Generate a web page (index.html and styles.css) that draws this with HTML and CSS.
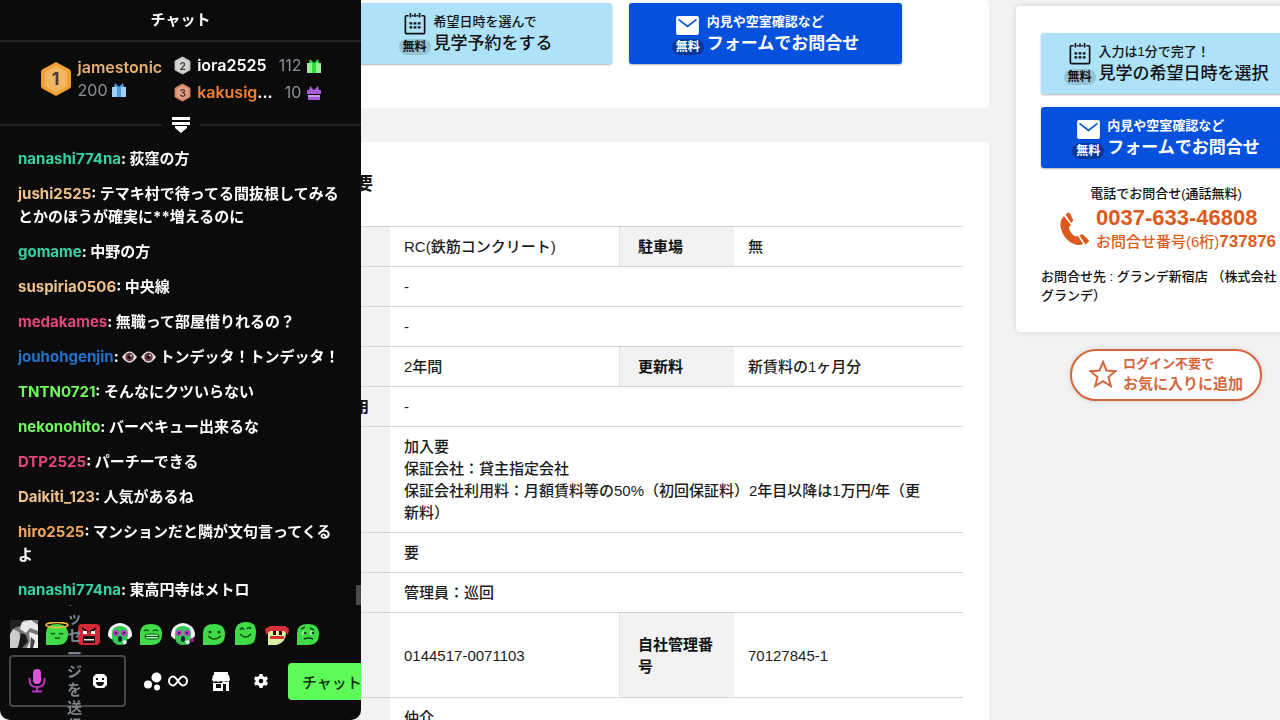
FILE: index.html
```html
<!DOCTYPE html>
<html lang="ja">
<head>
    <meta charset="utf-8" />
    <title>チャット</title>
    <link rel="stylesheet" href="styles.css">
</head>
<body>
    <!-- shared symbols -->
    <svg class="defs" aria-hidden="true">
        <symbol id="calendar" viewBox="0 0 24 24">
            <path d="M5 3.5H2.5a1 1 0 0 0-1 1V22a1 1 0 0 0 1 1h19a1 1 0 0 0 1-1V4.500a1 1 0 0 0-1-1H19M8.500 3.500h2M13.500 3.500h2M7 .5v5M12 1v4M17 .5v5" fill="none" stroke="currentColor" stroke-width="1.800" />
            <path d="M6 10.500h3v2.500H6zM10.500 10.500h3v2.500h-3zM15 10.500h3v2.500h-3zM6 15h3v2.500H6zM10.500 15h3v2.500h-3zM15 15h3v2.500h-3z" fill="currentColor" />
        </symbol>
        <symbol id="mail" viewBox="0 0 24 20">
            <rect x="0" y="0" width="24" height="20" rx="2" fill="#fff" />
            <path d="M2.500 3.500L12 11l9.500-7.500" fill="none" stroke="#0550dc" stroke-width="1.600" />
        </symbol>
        <symbol id="gift" viewBox="0 0 14 14">
            <path d="M0 4h14v10H0z" fill="currentColor" />
            <path d="M7 4L3 0 2 4zM7 4l4-4 1 4z" fill="currentColor" />
            <path d="M0 4h5v10H0zM9 4h5v10H9z" fill="#fff" opacity=".5" />
        </symbol>
        <symbol id="gift-box" viewBox="0 0 14 14">
            <path d="M0 4h14v4H0zM1 9h12v5H1z" fill="currentColor" />
            <path d="M7 4L3 0 2 4zM7 4l4-4 1 4z" fill="currentColor" />
            <path d="M1 9h12v2H1z" fill="#fff" opacity=".4" />
        </symbol>
        <symbol id="hex" viewBox="0 0 32 36">
            <path d="M16 1l13 7q2 1 2 3v14q0 2-2 3l-13 7-13-7q-2-1-2-3V11q0-2 2-3z" fill="currentColor" />
            <path d="M16 5l11 6v14l-11 6-11-6V11z" fill="#fff" opacity=".22" />
        </symbol>
        <symbol id="eye" viewBox="0 0 16 12">
            <path d="M0 6q8-12 16 0-8 12-16 0z" fill="#eadfe0" />
            <circle cx="8" cy="6" r="4.500" fill="#6b3a45" />
            <circle cx="8" cy="6" r="2" fill="#1c0c12" />
            <circle cx="9.500" cy="4.500" r="1" fill="#fff" />
        </symbol>
        <symbol id="blob" viewBox="0 0 24 24">
            <path d="M1 23V11Q1 2 12 2t11 10q0 11-11 11z" fill="#3fdc48" />
        </symbol>
        <symbol id="headset" viewBox="0 0 24 24">
            <path d="M0 14Q0 7 4 4q8-6 16 0 4 3 4 10l-3 3H3z" fill="#f4f4f4" />
            <path d="M4 17V11q0-7 8-7t8 7q0 12-8 12-6 0-8-6z" fill="#35c956" />
            <circle cx="8" cy="11" r="3" fill="#b83fc4" />
            <circle cx="16" cy="11" r="3" fill="#b83fc4" />
            <circle cx="8" cy="11" r="1" fill="#240b35" />
            <circle cx="16" cy="11" r="1" fill="#240b35" />
            <ellipse cx="12" cy="17" rx="2" ry="3" fill="#123" />
            <path d="M14 19l4-1 1 3-3 2z" fill="#dff5e3" />
        </symbol>
    </svg>

    <section class="chat">
        <header class="chat-title">チャット</header>

        <div class="leaderboard">
            <div class="first">
                <span class="badge large gold"><svg><use href="#hex" /></svg><b>1</b></span>
                <div>
                    <div class="name gold-name">jamestonic</div>
                    <div class="count">200 <svg class="gift blue"><use href="#gift" /></svg></div>
                </div>
            </div>
            <div class="others">
                <span class="badge silver"><svg><use href="#hex" /></svg><b>2</b></span>
                <span class="name">iora2525</span>
                <span class="count">112</span>
                <svg class="gift green"><use href="#gift" /></svg>
                <span class="badge bronze"><svg><use href="#hex" /></svg><b>3</b></span>
                <span class="name"><span class="bronze-name">kakusig</span>...</span>
                <span class="count">10</span>
                <svg class="gift purple"><use href="#gift-box" /></svg>
            </div>
        </div>

        <div class="divider">
            <svg viewBox="0 0 18 16"><path d="M0 0h18v3H0zM0 5h18v3H0zM3 9h12v2l-6 5-6-5z" fill="#fff" /></svg>
        </div>

        <div class="messages">
            <p><b class="teal">nanashi774na</b>: 荻窪の方</p>
            <p><b class="sand">jushi2525</b>: テマキ村で待ってる間抜根してみるとかのほうが確実に**増えるのに</p>
            <p><b class="teal">gomame</b>: 中野の方</p>
            <p><b class="sand">suspiria0506</b>: 中央線</p>
            <p><b class="pink">medakames</b>: 無職って部屋借りれるの？</p>
            <p><b class="navy">jouhohgenjin</b>: <svg class="eye"><use href="#eye" /></svg> <svg class="eye"><use href="#eye" /></svg> トンデッタ！トンデッタ！</p>
            <p><b class="lime">TNTN0721</b>: そんなにクツいらない</p>
            <p><b class="lime">nekonohito</b>: バーベキュー出来るな</p>
            <p><b class="pink">DTP2525</b>: パーチーできる</p>
            <p><b class="sand">Daikiti_123</b>: 人気があるね</p>
            <p><b class="orange">hiro2525</b>: マンションだと隣が文句言ってくるよ</p>
            <p><b class="teal">nanashi774na</b>: 東高円寺はメトロ</p>
            <span class="thumb"></span>
        </div>

        <div class="emotes">
            <svg viewBox="0 0 28 28">
                <path d="M0 0h28v28H0z" fill="#777" />
                <path d="M0 0h14l-4 6-6 2-4 8z" fill="#222" />
                <path d="M12 2l9-2 7 5v6l-8-3-4 5-6-4z" fill="#e8e8e8" />
                <path d="M3 9l6 3 2 8-4 8H0V14z" fill="#ccc" />
                <path d="M11 13l5 2 2 7-6 6H8z" fill="#1a1a1a" />
                <path d="M19 12l9 3v13H17l3-7z" fill="#eee" />
                <path d="M21 17l4 4-2 7h-3z" fill="#444" />
            </svg>
            <svg viewBox="0 0 24 24">
                <use href="#blob" />
                <ellipse cx="12" cy="3" rx="11" ry="2.500" fill="none" stroke="#f3b63c" stroke-width="1.600" />
                <path d="M6 11q2 2 4 0M14 11q2 2 4 0M10 16h5" fill="none" stroke="#125c1a" stroke-width="1.500" />
            </svg>
            <svg viewBox="0 0 24 24">
                <rect x="1" y="2" width="22" height="21" rx="4" fill="#d62839" />
                <path d="M5 6l6 4M19 6l-6 4" stroke="#200" stroke-width="2" />
                <path d="M6 9h4v3H6zM14 9h4v3h-4z" fill="#fff" />
                <path d="M6 14h12v7H6z" fill="#1a0a0a" />
                <path d="M7 17h10v1.500H7z" fill="#eee" />
            </svg>
            <svg viewBox="0 0 24 24"><use href="#headset" /></svg>
            <svg viewBox="0 0 24 24">
                <use href="#blob" />
                <path d="M5 9q2-2 5 0M14 9q2-2 5 0" fill="none" stroke="#125c1a" stroke-width="1.500" />
                <rect x="6" y="12" width="14" height="5" rx="2.500" fill="#a5eda5" stroke="#125c1a" />
                <path d="M6 14.500h14" stroke="#125c1a" />
            </svg>
            <svg viewBox="0 0 24 24">
                <use href="#headset" />
                <circle cx="21" cy="18" r="2" fill="#c2188c" />
            </svg>
            <svg viewBox="0 0 24 24">
                <use href="#blob" />
                <circle cx="8" cy="10" r="1.500" fill="#0c4a14" />
                <circle cx="17" cy="10" r="1.500" fill="#0c4a14" />
                <path d="M6 14q6 6 13 0" fill="none" stroke="#0c4a14" stroke-width="1.500" />
            </svg>
            <svg viewBox="0 0 24 24">
                <path d="M2 23V9Q3 0 13 0t10 9-3 12q-3 2-8 2z" fill="#3fdc48" />
                <path d="M7 8q2-4 4 0M14 7q2-3 4 0M7 12q6 6 11 0" fill="none" stroke="#0c4a14" stroke-width="1.500" />
            </svg>
            <svg viewBox="0 0 24 24">
                <path d="M3 23V10q0-6 9-6t9 7q0 9-9 12z" fill="#d9f0a0" />
                <path d="M0 7l5-3h15l4 3-1 6-4-4H5l-4 4z" fill="#d9303a" />
                <path d="M8 9h3v4H8zM14 9h3v4h-3z" fill="#300" />
                <path d="M5 14h14v3H5z" fill="#d9303a" />
            </svg>
            <svg viewBox="0 0 24 24">
                <use href="#blob" />
                <path d="M5 7l4-2M14 6l4 2M8 17q5-2 9 0" fill="none" stroke="#0c4a14" stroke-width="1.500" />
                <circle cx="8" cy="11" r="2" fill="#d8f5d8" />
                <circle cx="16" cy="11" r="2" fill="#d8f5d8" />
                <circle cx="9" cy="11" r="1.500" fill="#0c4a14" />
                <circle cx="17" cy="11" r="1.500" fill="#0c4a14" />
            </svg>
        </div>

        <div class="composer">
            <div class="box">
                <button class="icon" aria-label="音声">
                    <svg width="18" height="24" viewBox="0 0 18 24">
                        <rect x="5" y="0" width="8" height="15" rx="4" fill="#d758de" />
                        <path d="M1.500 9v2q0 7 7.500 7t7.500-7V9M9 18v4M4 22.500h10" fill="none" stroke="#b935c4" stroke-width="2" />
                    </svg>
                </button>
                <div class="entry">
                    <textarea aria-label="メッセージ" placeholder="メッセージを送信"></textarea>
                </div>
                <button class="icon" aria-label="エモート">
                    <svg width="14" height="14" viewBox="0 0 14 14">
                        <path d="M3 0h8l3 3v8l-3 3H3l-3-3V3z" fill="#fff" />
                        <path d="M3 4h2v2H3zM9 4h2v2H9zM3 8h8q0 4-4 4T3 8z" fill="#0b0b0b" />
                    </svg>
                </button>
            </div>
            <button class="icon points" aria-label="ポイント">
                <svg width="18" height="19" viewBox="0 0 18 19" fill="#fff">
                    <circle cx="12.500" cy="5.500" r="5" /><circle cx="4" cy="12.500" r="4" /><circle cx="13" cy="15.500" r="3" />
                </svg>
                <svg width="20" height="12" viewBox="0 0 20 12">
                    <path d="M10 6Q7 1.500 5 1.500a4 4.500 0 0 0 0 9Q7 10.500 10 6t5-4.500a4 4.500 0 0 1 0 9Q13 10.500 10 6z" fill="none" stroke="#fff" stroke-width="2" />
                </svg>
            </button>
            <button class="icon shop" aria-label="ショップ">
                <svg width="18" height="19" viewBox="0 0 18 19">
                    <path d="M2 0h14v3H2zM1 3h16l1 5-2 2-2-1-2 1-3-1-3 1-2-1-2 1-2-2zM1 11h10v8H1zM14 11h3v8h-3zM10 10h7v2h-7z" fill="#fff" />
                    <path d="M4 12h5v4H4z" fill="#0b0b0b" />
                </svg>
            </button>
            <button class="icon gear" aria-label="設定">
                <svg width="14" height="14" viewBox="0 0 14 14">
                    <path d="M5.500 0h3l.5 2 1.500 1 2-.7L14 5l-1.500 1.300v1.400L14 9l-1.500 2.700-2-.7L9 12l-.5 2h-3L5 12l-1.500-1-2 .7L0 9l1.500-1.300V6.300L0 5l1.500-2.700 2 .7L5 2z" fill="#fff" />
                    <circle cx="7" cy="7" r="2.300" fill="#0b0b0b" />
                </svg>
            </button>
            <button class="send">チャット</button>
        </div>
    </section>

    <div class="page">
        <main>
            <section class="card actions">
                <button class="cta light">
                    <span class="mark"><svg class="calendar"><use href="#calendar" /></svg><em>無料</em></span>
                    <span class="label"><small>希望日時を選んで</small>見学予約をする</span>
                </button>
                <button class="cta blue">
                    <span class="mark"><svg class="mail"><use href="#mail" /></svg><em>無料</em></span>
                    <span class="label"><small>内見や空室確認など</small>フォームでお問合せ</span>
                </button>
            </section>

            <section class="card details">
                <h2>要</h2>
                <table>
                    <tr><th></th><td>RC(鉄筋コンクリート)</td><th>駐車場</th><td>無</td></tr>
                    <tr><th></th><td colspan="3">-</td></tr>
                    <tr><th></th><td colspan="3">-</td></tr>
                    <tr><th></th><td>2年間</td><th>更新料</th><td>新賃料の1ヶ月分</td></tr>
                    <tr><th class="end">用</th><td colspan="3">-</td></tr>
                    <tr><th></th><td colspan="3">加入要<br>保証会社：貸主指定会社<br>保証会社利用料：月額賃料等の50%（初回保証料）2年目以降は1万円/年（更新料）</td></tr>
                    <tr><th></th><td colspan="3">要</td></tr>
                    <tr><th></th><td colspan="3">管理員：巡回</td></tr>
                    <tr class="tall"><th></th><td>0144517-0071103</td><th>自社管理番号</th><td>70127845-1</td></tr>
                    <tr><th></th><td colspan="3">仲介</td></tr>
                </table>
            </section>
        </main>

        <aside>
            <section class="card contact">
                <button class="cta light">
                    <span class="mark"><svg class="calendar"><use href="#calendar" /></svg><em>無料</em></span>
                    <span class="label"><small>入力は1分で完了！</small>見学の希望日時を選択</span>
                </button>
                <button class="cta blue">
                    <span class="mark"><svg class="mail"><use href="#mail" /></svg><em>無料</em></span>
                    <span class="label"><small>内見や空室確認など</small>フォームでお問合せ</span>
                </button>
                <p class="tel-title">電話でお問合せ(通話無料)</p>
                <div class="tel">
                    <svg width="30" height="34" viewBox="0 0 30 34" fill="#dc5a1c">
                        <path d="M4 4Q-1 9 1 17q3 11 13 15 5 2 9 0l-5-8q-3 1-5-1-4-4-4-8l2-2z" />
                        <path d="M5.500 2.500L8 .5q1-.5 2 1l3 6q.5 1-.5 2L11 11zM19.500 23.500l2-1q1-.5 2 .5l5 5q1 1 0 2l-3 2.500z" />
                    </svg>
                    <div>
                        <div class="number">0037-633-46808</div>
                        <div class="code">お問合せ番号(6桁)<b>737876</b></div>
                    </div>
                </div>
                <p class="shop-name">お問合せ先 : グランデ新宿店 （株式会社グランデ）</p>
            </section>
            <button class="favorite">
                <svg width="28" height="28" viewBox="0 0 28 28"><path d="M14 2l3.500 8.500 9 .7-7 5.800 2.300 9L14 21.200 6.200 26l2.300-9-7-5.800 9-.7z" fill="none" stroke="#d4663c" stroke-width="2" /></svg>
                <span><small>ログイン不要で</small>お気に入りに追加</span>
            </button>
        </aside>
    </div>
</body>
</html>
```
FILE: styles.css
```css
* {
    box-sizing: border-box;
    padding: 0;
    margin: 0;
}

body {
    height: 100vh;
    overflow: hidden;
    background-color: #f2f2f2;
    color: #111;
    font-family: "Liberation Sans", "Noto Sans CJK JP", sans-serif;
    font-size: 15px;
    font-weight: 500;
}

b {
    font-weight: 700;
}

button {
    border: none;
    background: none;
    color: inherit;
    font: inherit;
    cursor: pointer;
}

.defs {
    position: absolute;
    width: 0;
    height: 0;
}

/* chat, docked over the page */
.chat {
    position: fixed;
    top: 0;
    bottom: 0;
    left: 0;
    z-index: 1;
    width: 361px;
    display: flex;
    flex-direction: column;
    overflow: hidden;
    border-radius: 0 0 10px 10px;
    background-color: #0b0b0b;
    color: #fff;
    font-family: Inter, "Noto Sans CJK JP", sans-serif;
}

.chat-title {
    height: 42px;
    border-bottom: 2px solid #222;
    font-size: 15px;
    font-weight: 700;
    line-height: 40px;
    text-align: center;
}

.leaderboard {
    display: flex;
    justify-content: center;
    align-items: center;
    gap: 12px;
    height: 74px;
    font-size: 16px;
}

.first {
    display: flex;
    align-items: center;
    gap: 6px;
    line-height: 23px;
}

.others {
    display: grid;
    grid-template-columns: 17px auto auto 14px;
    align-items: center;
    column-gap: 6px;
    line-height: 27px;
}

.name {
    font-weight: 600;
}

.gold-name { color: #eab070; }
.bronze-name { color: #ee8336; }

.count {
    color: #8b929b;
    font-weight: 400;
    text-align: right;
}

.first .count {
    text-align: left;
}

.gift {
    width: 14px;
    height: 14px;
}

.first .gift {
    vertical-align: -1px;
}

.gift.blue { color: #4b9fe0; }
.gift.green { color: #2fdc38; }
.gift.purple { color: #a95bd5; }

.badge {
    display: grid;
    place-items: center;
    width: 17px;
    height: 19px;
    font-size: 10px;
    line-height: 1;
}

.badge > * {
    grid-area: 1 / 1;
}

.badge svg {
    width: 100%;
    height: 100%;
}

.badge b {
    z-index: 1;
    color: #4a3a30;
}

.badge.large {
    width: 32px;
    height: 36px;
    font-size: 18px;
}

.gold { color: #efa136; }
.silver { color: #c9c9c9; }
.bronze { color: #d98565; }

.divider {
    display: flex;
    align-items: center;
    gap: 10px;
    height: 18px;
}

.divider::before,
.divider::after {
    content: "";
    flex: 1;
    height: 2px;
    background-color: #222;
}

.divider svg {
    width: 18px;
    height: 16px;
}

.messages {
    position: relative;
    flex: 1;
    display: flex;
    flex-direction: column;
    gap: 12px;
    padding: 13px 16px 0 18px;
    font-size: 15px;
    font-weight: 700;
    line-height: 23px;
}

.teal { color: #35d3a5; }
.sand { color: #efc28c; }
.orange { color: #efa75f; }
.pink { color: #e2487f; }
.navy { color: #1f74cf; }
.lime { color: #70fa60; }

.eye {
    width: 15px;
    height: 12px;
    vertical-align: -1px;
}

.thumb {
    position: absolute;
    right: 0;
    bottom: 14px;
    width: 5px;
    height: 20px;
    background-color: #4a4a4a;
}

.emotes {
    display: flex;
    justify-content: space-between;
    align-items: center;
    height: 30px;
    padding: 0 41px 0 10px;
}

.emotes svg {
    width: 24px;
    height: 24px;
}

.emotes svg:first-child {
    width: 28px;
    height: 28px;
}

.composer {
    display: flex;
    align-items: center;
    height: 71px;
    padding: 0 0 7px 9px;
}

.box {
    position: relative;
    flex: none;
    display: flex;
    justify-content: space-between;
    align-items: center;
    width: 117px;
    height: 52px;
    padding: 0 17px;
    border: 2px solid #45454a;
    border-radius: 4px;
}

.icon {
    flex: none;
    display: flex;
    align-items: center;
}

/* the field is one character wide and spills out of the box */
.entry {
    position: absolute;
    top: -52px;
    left: 56px;
    width: 18px;
    height: 118px;
    overflow: hidden;
}

.entry textarea {
    display: block;
    width: 18px;
    height: 148px;
    margin-top: -14px;
    border: none;
    outline: none;
    resize: none;
    overflow: hidden;
    background: none;
    color: #fff;
    font: 700 15px/18px Inter, "Noto Sans CJK JP", sans-serif;
    word-break: break-all;
}

.entry textarea::placeholder {
    color: #7b858b;
}

.points {
    gap: 6px;
    margin-left: 18px;
}

.shop {
    margin-left: 24px;
}

.gear {
    margin-left: 24px;
}

.send {
    flex: none;
    height: 37px;
    margin-left: 20px;
    padding: 0 14px;
    border-radius: 4px;
    background-color: #5cfb58;
    color: #0d2b0d;
    font-size: 15px;
    font-weight: 500;
}

/* page */
.page {
    display: flex;
    gap: 27px;
    height: 100vh;
    margin-left: 249px;
    overflow: hidden;
}

main {
    flex: 1;
}

.card {
    border-radius: 4px;
    background-color: #fff;
}

.actions {
    display: flex;
    justify-content: flex-end;
    gap: 17px;
    margin-bottom: 34px;
    padding: 3px 87px 44px 90px;
}

.cta {
    display: flex;
    justify-content: center;
    align-items: center;
    gap: 3px;
    height: 61px;
    border-radius: 3px;
    box-shadow: 0 1px 2px rgba(0, 0, 0, 0.3);
    text-align: left;
    white-space: nowrap;
}

.actions .cta {
    flex: 1;
}

.light {
    background-color: #aee2f9;
}

.cta.blue {
    background-color: #0550dc;
    color: #fff;
    font-weight: 700;
}

.mark {
    display: flex;
    flex-direction: column;
    align-items: center;
    gap: 4px;
}

.mark em {
    width: 32px;
    border-radius: 8px;
    background-color: rgba(0, 0, 0, 0.14);
    font-size: 12px;
    font-style: normal;
    font-weight: 700;
    line-height: 16px;
    text-align: center;
}

.blue .mark em {
    background-color: rgba(0, 0, 0, 0.3);
}

.calendar {
    width: 22px;
    height: 23px;
}

.mail {
    width: 23px;
    height: 19px;
    margin-top: 3px;
}

.label {
    font-size: 17px;
    line-height: 24px;
}

.label small {
    display: block;
    font-size: 13px;
    line-height: 20px;
}

.details {
    padding: 28px 26px;
}

.details h2 {
    width: 98px;
    height: 56px;
    font-size: 18px;
    font-weight: 700;
    line-height: 28px;
    text-align: right;
}

table {
    width: 100%;
    table-layout: fixed;
    border-spacing: 0;
    border-top: 1px solid #d4d4d4;
    line-height: 22px;
}

th,
td {
    padding: 9px 32px 8px 14px;
    border-bottom: 1px solid #d4d4d4;
    text-align: left;
}

/* ideographs stay dark, the thin latin text reads lighter */
td {
    color: #1c1c1c;
}

th {
    width: 115px;
    padding-right: 18px;
    padding-left: 18px;
    background-color: #f2f2f2;
    font-weight: 700;
}

td + th {
    border-left: 1px dotted #d4d4d4;
}

.end {
    padding-right: 21px;
    text-align: right;
}

.tall {
    height: 85px;
}

aside {
    width: 300px;
    margin: 6px -36px 0 0;
}

.contact {
    display: flex;
    flex-direction: column;
    padding: 27px 25px;
    box-shadow: 0 0 6px rgba(0, 0, 0, 0.12);
    font-size: 13px;
    line-height: 19px;
}

.contact .blue {
    margin-top: 13px;
}

.tel-title {
    margin-top: 16px;
    text-align: center;
}

.tel {
    display: flex;
    align-items: center;
    gap: 6px;
    margin: 2px 0 14px 19px;
    color: #dc5a1c;
    white-space: nowrap;
}

.number {
    font-size: 22px;
    font-weight: 700;
    line-height: 26px;
}

.code {
    font-size: 15px;
    line-height: 22px;
}

.code b {
    font-size: 17px;
}

.shop-name {
    padding-right: 8px;
}

.favorite {
    display: flex;
    justify-content: center;
    align-items: center;
    gap: 6px;
    width: 192px;
    height: 52px;
    margin: 17px auto 0;
    padding-bottom: 2px;
    border: 2px solid #d4663c;
    border-radius: 26px;
    background-color: #fff;
    box-shadow: 0 0 5px rgba(0, 0, 0, 0.15);
    color: #d4663c;
    font-weight: 700;
    line-height: 20px;
    text-align: left;
    white-space: nowrap;
}

.favorite small {
    display: block;
    font-size: 13px;
}
```
